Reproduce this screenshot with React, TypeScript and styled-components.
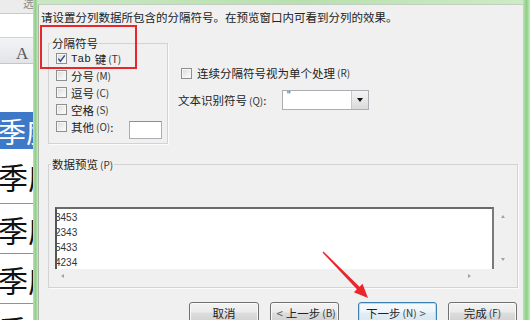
import React from "react";
import styled, { createGlobalStyle, css } from "styled-components";

const GlobalStyle = createGlobalStyle`
  html, body {
    margin: 0;
    padding: 0;
    background: #ffffff;
  }
  body {
    font-family: "Noto Sans CJK SC", "Noto Sans", sans-serif;
    color: #222;
  }
`;

const Screen = styled.div`
  position: relative;
  display: flex;
  width: 530px;
  height: 320px;
  overflow: hidden;
  background: #fff;
`;

// spreadsheet peeking out behind the dialog
const Sheet = styled.div`
  width: 33px;
  flex: none;
  display: flex;
  flex-direction: column;
  overflow: hidden;
`;

const SheetToolbar = styled.div`
  height: 13px;
  flex: none;
  background: #ececec;
  border-bottom: 1px solid #c9c9c9;
  padding-left: 23px;
  font-size: 11px;
  line-height: 6px;
  color: #8a8a8a;
  white-space: nowrap;
  overflow: hidden;
`;

const FormulaRow = styled.div`
  height: 23px;
  flex: none;
  background: #fff;
  border-bottom: 1px solid #d4d4d4;
`;

const ColumnHeader = styled.div`
  height: 26px;
  flex: none;
  display: flex;
  align-items: flex-end;
  padding: 0 0 1px 16px;
  box-sizing: border-box;
  background: linear-gradient(#f3f4f6, #e2e4e8);
  border-bottom: 1px solid #c3c6cb;
  font-family: "Liberation Serif", serif;
  font-size: 17px;
  line-height: 16px;
  color: #555;
`;

const BlankRow = styled.div`
  height: 48px;
  flex: none;
  background: #fff;
`;

const CellRow = styled.div<{ $h: number; $selected?: boolean }>`
  height: ${(p) => p.$h}px;
  flex: none;
  display: flex;
  align-items: center;
  box-sizing: border-box;
  margin-left: -2px;
  white-space: nowrap;
  overflow: hidden;
  font-size: 30px;
  line-height: 30px;
  ${(p) =>
    p.$selected
      ? css`
          background: #3d79c8;
          color: #fff;
          font-size: 28px;
        `
      : css`
          background: #fff;
          color: #111;
          border-bottom: 1px solid #6c98d4;
        `}
`;

const GreenEdge = styled.div<{ $w: number }>`
  width: ${(p) => p.$w}px;
  flex: none;
  background: linear-gradient(90deg, #b9e3b2, #8fcf88 50%, #c7ebc0);
`;

const Frame = styled.div`
  flex: 1;
  display: flex;
  flex-direction: column;
  min-width: 0;
`;

const FrameTop = styled.div`
  height: 4px;
  flex: none;
  background: linear-gradient(90deg, #c9e8c1, #b8e0ae 55%, #cdecc6);
`;

const Dialog = styled.div`
  flex: 1;
  display: flex;
  flex-direction: column;
  background: #f0f0f0;
  border-left: 1px solid #aab5a8;
  border-top: 1px solid #c4cdc2;
  padding: 5px 0 0 2px;
  font-size: 11.5px;
  line-height: 14px;
`;

const Intro = styled.div`
  white-space: nowrap;
`;

const OptionsRow = styled.div`
  display: flex;
  margin-top: 12px;
`;

const Group = styled.fieldset<{ $w: number }>`
  margin: 0 0 0 7px;
  width: ${(p) => p.$w}px;
  box-sizing: border-box;
  min-width: 0;
  border: 1px solid #d3d3d3;
  box-shadow: 1px 1px 0 #fbfbfb;
`;

const DelimGroup = styled(Group)`
  padding: 0 5px 8px 2px;
`;

const PreviewGroup = styled(Group)`
  margin-top: 13px;
  padding: 35px 5px 5px 6px;
`;

const Legend = styled.legend<{ $shift?: number }>`
  padding: 0 1px;
  margin-left: ${(p) => p.$shift ?? 0}px;
  font-size: 11.5px;
  line-height: 14px;
  color: #222;
`;

const OptionRow = styled.div`
  display: flex;
  align-items: center;
  height: 17px;
  padding-left: 5px;
  white-space: nowrap;
`;

const Box = styled.span`
  width: 11px;
  height: 11px;
  flex: none;
  box-sizing: border-box;
  display: inline-flex;
  align-items: center;
  justify-content: center;
  margin-right: 4px;
  border: 1px solid #8e8f8f;
  background: linear-gradient(135deg, #d9d9d9 0%, #efefef 55%, #fdfdfd 100%);
  box-shadow: inset 0 0 0 1px #f6f6f6;
`;

const Checkbox = ({ checked }: { checked?: boolean }) => (
  <Box>
    {checked && (
      <svg width="9" height="9" viewBox="0 0 9 9">
        <path d="M1.3 4.6 L3.4 7.2 L7.8 1.4" fill="none" stroke="#2f4f94" strokeWidth="1.5" />
      </svg>
    )}
  </Box>
);

const Mn = styled.span`
  font-size: 10px;
  margin-left: 2px;
  color: #333;
`;

const Latin = styled.span`
  font-family: "Liberation Mono", monospace;
  font-size: 11px;
  margin-right: 4px;
`;

const OtherInput = styled.span`
  width: 33px;
  height: 18px;
  flex: none;
  box-sizing: border-box;
  margin: 6px 0 0 auto;
  background: #fff;
  border: 1px solid #abadb3;
  border-top-color: #8c8f96;
`;

const SideColumn = styled.div`
  display: flex;
  flex-direction: column;
  margin-left: 10px;
  padding-top: 30px;
`;

const SideCheck = styled.div`
  display: flex;
  align-items: center;
  height: 14px;
  padding-left: 3px;
  white-space: nowrap;
  & > span:first-child {
    margin-right: 5px;
  }
`;

const QualifierRow = styled.div`
  display: flex;
  align-items: center;
  height: 20px;
  margin-top: 10px;
  white-space: nowrap;
`;

const FieldLabel = styled.span`
  width: 104px;
  flex: none;
`;

const Select = styled.div`
  width: 87px;
  height: 20px;
  box-sizing: border-box;
  display: flex;
  background: #fff;
  border: 1px solid #abadb3;
`;

const SelectValue = styled.span`
  flex: 1;
  padding: 0 0 0 4px;
  font-family: "Liberation Sans", sans-serif;
  font-size: 10px;
  line-height: 10px;
  color: #444;
`;

const SelectButton = styled.span`
  width: 16px;
  flex: none;
  display: flex;
  align-items: center;
  justify-content: center;
  border-left: 1px solid #c8c8c8;
  background: linear-gradient(#f4f4f4, #dadada);
  &::after {
    content: "";
    border-left: 3.5px solid transparent;
    border-right: 3.5px solid transparent;
    border-top: 4px solid #111;
  }
`;

const PreviewRow = styled.div`
  display: flex;
`;

const PreviewBox = styled.div`
  width: 439px;
  height: 62px;
  flex: none;
  box-sizing: border-box;
  overflow: hidden;
  padding-top: 1px;
  background: #fff;
  border-top: 2px solid #6a6a6a;
  border-left: 2px solid #555;
  border-right: 2px solid #7a7a7a;
  font-family: "Liberation Sans", sans-serif;
  font-size: 10px;
  line-height: 15px;
  color: #333;
  text-indent: -2px;
`;

const VScroll = styled.div`
  flex: 1;
  display: flex;
  flex-direction: column;
  align-items: center;
  justify-content: space-between;
  padding: 8px 0 8px;
`;

const HScroll = styled.div`
  height: 13px;
  display: flex;
  align-items: center;
  justify-content: space-between;
  padding: 0 23px 0 6px;
  width: 439px;
  box-sizing: border-box;
`;

const Arrow = styled.span<{ $dir: "up" | "down" | "left" | "right" }>`
  width: 0;
  height: 0;
  ${(p) =>
    p.$dir === "up" || p.$dir === "down"
      ? css`
          border-left: 2.5px solid transparent;
          border-right: 2.5px solid transparent;
          ${p.$dir === "up" ? "border-bottom" : "border-top"}: 3px solid #a2a2a2;
        `
      : css`
          border-top: 2.5px solid transparent;
          border-bottom: 2.5px solid transparent;
          ${p.$dir === "left" ? "border-right" : "border-left"}: 3px solid #a2a2a2;
        `}
`;

const ButtonRow = styled.div`
  display: flex;
  justify-content: flex-end;
  gap: 11px;
  margin-top: 14px;
  padding-right: 6px;
`;

const Button = styled.div<{ $w: number; $default?: boolean }>`
  width: ${(p) => p.$w}px;
  height: 22px;
  flex: none;
  box-sizing: border-box;
  display: flex;
  align-items: center;
  justify-content: center;
  white-space: nowrap;
  border: 1px solid #707070;
  border-radius: 3px;
  background: linear-gradient(#f3f3f3 0%, #ebebeb 45%, #dddddd 50%, #cfcfcf 100%);
  box-shadow: inset 0 0 0 1px #fafafa;
  font-size: 11.5px;
  ${(p) =>
    p.$default &&
    css`
      margin-left: 8px;
      border-color: #3c7fb1;
      background: linear-gradient(#f6fafd 0%, #eef5fa 45%, #e2edf5 50%, #d9e7f1 100%);
      box-shadow: inset 0 0 0 1px #b9dcf2;
    `}
`;

const Chevron = styled.span`
  color: #555;
  margin: 0 3px;
`;

// red annotations drawn on top of the screenshot
const Highlight = styled.div`
  position: absolute;
  left: 40px;
  top: 25px;
  width: 97px;
  height: 44px;
  box-sizing: border-box;
  border: 2px solid #e8262b;
  pointer-events: none;
`;

const Overlay = styled.svg`
  position: absolute;
  left: 0;
  top: 0;
  pointer-events: none;
`;

const cellText = "季度季度";
const previewLines = ["3453", "2343", "5433", "4234"];

export default function App() {
  return (
    <>
      <GlobalStyle />
      <Screen>
        <Sheet>
          <SheetToolbar>选</SheetToolbar>
          <FormulaRow />
          <ColumnHeader>A</ColumnHeader>
          <BlankRow />
          <CellRow $h={37} $selected>
            {cellText}
          </CellRow>
          <CellRow $h={55}>{cellText}</CellRow>
          <CellRow $h={50}>{cellText}</CellRow>
          <CellRow $h={50}>{cellText}</CellRow>
          <CellRow $h={50}>{cellText}</CellRow>
        </Sheet>
        <GreenEdge $w={5} />
        <Frame>
          <FrameTop />
          <Dialog>
            <Intro>请设置分列数据所包含的分隔符号。在预览窗口内可看到分列的效果。</Intro>
            <OptionsRow>
              <DelimGroup $w={120}>
                <Legend>分隔符号</Legend>
                <OptionRow>
                  <Checkbox checked />
                  <Latin>Tab</Latin>键<Mn>(T)</Mn>
                </OptionRow>
                <OptionRow>
                  <Checkbox />
                  分号<Mn>(M)</Mn>
                </OptionRow>
                <OptionRow>
                  <Checkbox />
                  逗号<Mn>(C)</Mn>
                </OptionRow>
                <OptionRow>
                  <Checkbox />
                  空格<Mn>(S)</Mn>
                </OptionRow>
                <OptionRow>
                  <Checkbox />
                  其他<Mn>(O)</Mn>:
                  <OtherInput />
                </OptionRow>
              </DelimGroup>
              <SideColumn>
                <SideCheck>
                  <Checkbox />
                  连续分隔符号视为单个处理<Mn>(R)</Mn>
                </SideCheck>
                <QualifierRow>
                  <FieldLabel>
                    文本识别符号<Mn>(Q)</Mn>:
                  </FieldLabel>
                  <Select>
                    <SelectValue>"</SelectValue>
                    <SelectButton />
                  </Select>
                </QualifierRow>
              </SideColumn>
            </OptionsRow>
            <PreviewGroup $w={470}>
              <Legend $shift={-4}>
                数据预览<Mn>(P)</Mn>
              </Legend>
              <PreviewRow>
                <PreviewBox>
                  {previewLines.map((line) => (
                    <div key={line}>{line}</div>
                  ))}
                </PreviewBox>
                <VScroll>
                  <Arrow $dir="up" />
                  <Arrow $dir="down" />
                </VScroll>
              </PreviewRow>
              <HScroll>
                <Arrow $dir="left" />
                <Arrow $dir="right" />
              </HScroll>
            </PreviewGroup>
            <ButtonRow>
              <Button $w={70}>取消</Button>
              <Button $w={69}>
                <Chevron>&lt;</Chevron>上一步<Mn>(B)</Mn>
              </Button>
              <Button $w={79} $default>
                下一步<Mn>(N)</Mn>
                <Chevron>&gt;</Chevron>
              </Button>
              <Button $w={69}>
                完成<Mn>(F)</Mn>
              </Button>
            </ButtonRow>
          </Dialog>
        </Frame>
        <GreenEdge $w={7} />
        <Highlight />
        <Overlay width="530" height="320" viewBox="0 0 530 320">
          <polygon
            points="323.5,251.5 359.5,286.7 362.5,283.8 368,298 353.9,292.2 356.9,289.3 322.5,252.5"
            fill="#e8262b"
          />
        </Overlay>
      </Screen>
    </>
  );
}
